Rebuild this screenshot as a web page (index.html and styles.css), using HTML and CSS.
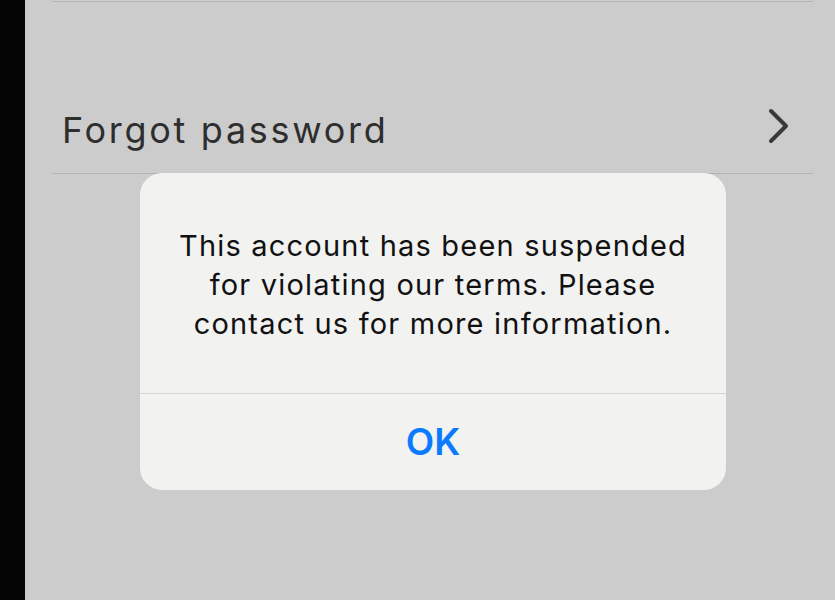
FILE: index.html
```html
<!DOCTYPE html>
<html>
<head>
<meta charset="utf-8">
<link rel="stylesheet" href="styles.css">
</head>
<body>
<div class="screen">
  <div class="side"></div>
  <div class="content">
    <div class="list">
      <div class="prev-row"></div>
      <div class="row">
        <span class="row-label">Forgot password</span>
        <svg class="chevron" width="24" height="36" viewBox="0 0 24 36">
          <polyline points="4,3 19,18 4,33" fill="none" stroke="#3a3a3a" stroke-width="4" stroke-linecap="round" stroke-linejoin="round"/>
        </svg>
      </div>
    </div>
    <div class="alert">
      <div class="alert-msg">This account has been suspended for violating our terms. Please contact us for more information.</div>
      <div class="alert-btn">OK</div>
    </div>
  </div>
</div>
</body>
</html>
```
FILE: styles.css
```css
html, body {
  margin: 0;
  padding: 0;
  background: #000;
}
.screen {
  display: flex;
  width: 835px;
  height: 600px;
  overflow: hidden;
}
.side {
  width: 25px;
  background: #050505;
  flex: none;
}
.content {
  flex: 1;
  background: #cccccc;
  position: relative;
}
.list {
  padding: 0 22px 0 27px;
}
.prev-row {
  height: 1px;
  border-bottom: 1px solid #b3b3b3;
}
.row {
  height: 171px;
  border-bottom: 1px solid #b3b3b3;
  display: flex;
  align-items: flex-end;
  justify-content: space-between;
  padding: 0 22px 0 10px;
}
.row-label {
  font-family: "Inter", "Liberation Sans", sans-serif;
  font-size: 36px;
  color: #2e2e2e;
  line-height: 1;
  margin-bottom: 25px;
  letter-spacing: 2.7px;
}
.chevron {
  margin-bottom: 29px;
}
.alert {
  position: absolute;
  left: 115px;
  top: 173px;
  width: 586px;
  height: 317px;
  background: #f2f2f1;
  border-radius: 22px;
  display: flex;
  flex-direction: column;
  font-family: "Inter", "Liberation Sans", sans-serif;
}
.alert-msg {
  height: 221px;
  box-sizing: border-box;
  padding: 53px 36px 0;
  text-align: center;
  font-size: 29px;
  line-height: 39px;
  letter-spacing: 1.2px;
  color: #111;
  border-bottom: 1px solid #d6d6d6;
}
.alert-btn {
  flex: 1;
  display: flex;
  align-items: center;
  justify-content: center;
  color: #0a7aff;
  font-size: 37px;
  font-weight: 600;
  padding-bottom: 2px;
}
```
